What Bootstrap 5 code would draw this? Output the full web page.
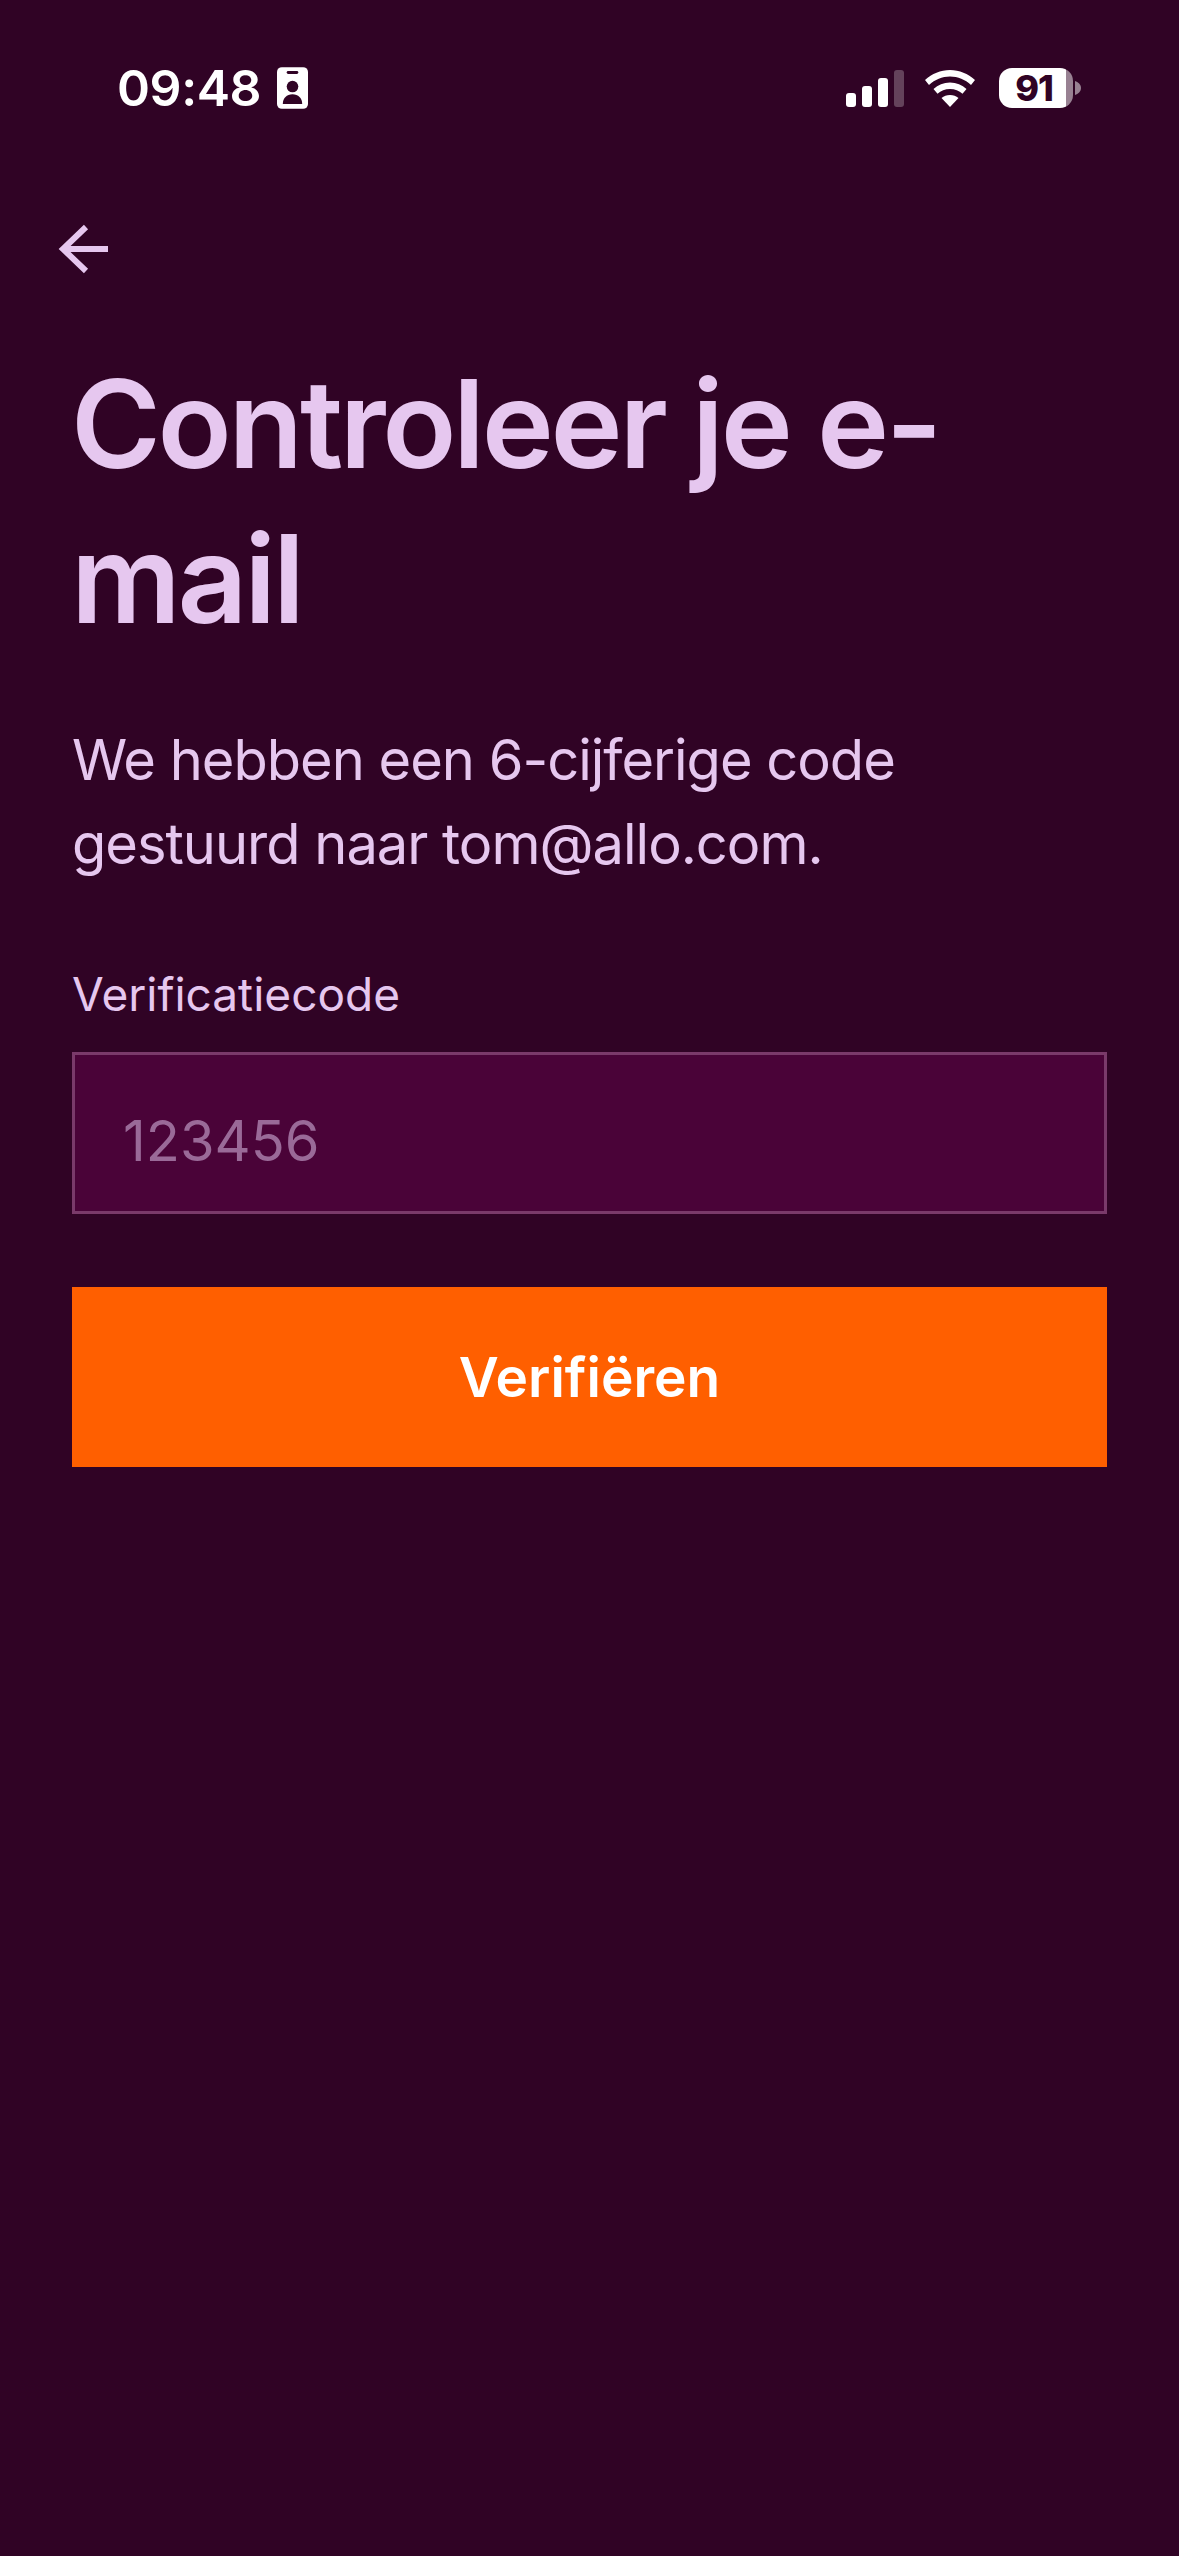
<!DOCTYPE html>
<html lang="nl">

<head>
  <meta charset="utf-8">
  <meta name="viewport" content="width=device-width">
  <title>Controleer je e-mail</title>
  <link href="https://cdn.jsdelivr.net/npm/bootstrap@5.3.3/dist/css/bootstrap.min.css" rel="stylesheet"/>
  <style>
    html, body { height: 100%; }
    body { background: #300325; font-family: Inter, "Noto Sans", sans-serif; color: #e6c7ef; }
    .screen { min-height: 2556px; }
    .status-bar { height: 88px; margin-top: 44px; padding: 0 98px 0 117px; color: #fff; }
    .status-time { font-size: 50px; font-weight: 600; line-height: 1; letter-spacing: -.4px; }
    .signal-icon { margin-right: 21px; }
    .batt-body { width: 74px; height: 40px; border-radius: 13px; background: linear-gradient(90deg, #fff 90%, rgba(255,255,255,.5) 90%); color: #300325; font-size: 36px; font-weight: 800; line-height: 1; letter-spacing: -1px; padding-right: 4px; }
    .batt-nub { margin-left: 2px; }
    .back-link { display: block; width: 56px; height: 56px; margin: 90px 0 0 58px; }
    .content { padding: 0 72px; }
    .page-title { font-size: 122px; font-weight: 600; line-height: 155px; letter-spacing: -3.3px; margin: 68px 0 0 -1px; color: #e6c7ef; }
    .intro { font-size: 56px; line-height: 84px; letter-spacing: -1px; margin: 62px 0 0; font-weight: 400; }
    .code-label { font-size: 46px; line-height: 56px; margin: 80px 0 0; display: block; font-weight: 400; }
    .code-input, .code-input:focus { height: 162px; margin-top: 30px; background: #4a0338; border: 3px solid #7a3a6a; border-radius: 0; padding: 16px 48px 0; font-size: 56px; color: #e6c7ef; box-shadow: none; }
    .code-input::placeholder { color: #9a6a98; opacity: 1; }
    .verify-btn, .verify-btn:hover { height: 180px; margin-top: 73px; background: #ff5f00; color: #fff; border: 0; border-radius: 0; font-size: 55px; font-weight: 600; }
  </style>
</head>

<body>
  <div class="screen">
    <div class="status-bar d-flex justify-content-between align-items-center">
      <div class="d-flex align-items-center gap-3">
        <span class="status-time">09:48</span>
        <svg width="31" height="42" viewBox="0 0 32 43">
          <rect width="32" height="43" rx="5" fill="#fff"/>
          <rect x="10" y="4" width="12" height="3" rx="1.5" fill="#300325"/>
          <circle cx="16" cy="20" r="6" fill="#300325"/>
          <path d="M6 38c0-6 4-10 10-10s10 4 10 10z" fill="#300325"/>
        </svg>
      </div>
      <div class="d-flex align-items-center">
        <svg class="signal-icon" width="58" height="37" viewBox="0 0 58 37">
          <rect x="0" y="23" width="10" height="14" rx="3" fill="#fff"/>
          <rect x="16" y="16" width="10" height="21" rx="3" fill="#fff"/>
          <rect x="32" y="8" width="10" height="29" rx="3" fill="#fff"/>
          <rect x="48" y="0" width="10" height="37" rx="3" fill="#fff" fill-opacity=".25"/>
        </svg>
        <svg width="50" height="37" viewBox="0 0 50 37">
          <path d="M25 0C15.500 0 7 3.700 0 10l4 5C10 9.500 17 6.500 25 6.500S40 9.500 46 15l4-5C43 3.700 34.500 0 25 0z" fill="#fff"/>
          <path d="M25 12.500c-6.500 0-12 2.300-16.500 6.500l4 4.800C16 20.500 20 19 25 19s9 1.500 12.500 4.800l4-4.800C37 14.800 31.500 12.500 25 12.500z" fill="#fff"/>
          <path d="M25 25c-3.500 0-6 1-8.500 3L25 37l8.500-9c-2.500-2-5-3-8.500-3z" fill="#fff"/>
        </svg>
        <div class="batt-body d-flex align-items-center justify-content-center ms-4">91</div>
        <svg class="batt-nub" width="6" height="14" viewBox="0 0 6 14">
          <path d="M0 0c3 1 6 3.500 6 7s-3 6-6 7z" fill="#fff" fill-opacity=".5"/>
        </svg>
      </div>
    </div>

    <a class="back-link" href="#" aria-label="Terug">
      <svg width="56" height="56" viewBox="0 0 56 56" fill="none" stroke="#e6c7ef" stroke-width="6">
        <path d="M5 27H50"/>
        <path d="M28 5L5 27l23 22"/>
      </svg>
    </a>

    <div class="content">
      <h1 class="page-title">Controleer je e-mail</h1>
      <p class="intro">We hebben een 6-cijferige code gestuurd naar tom@allo.com.</p>
      <form>
        <label class="code-label" for="code">Verificatiecode</label>
        <input class="form-control code-input" id="code" placeholder="123456"/>
        <button class="btn verify-btn w-100" type="button">Verifiëren</button>
      </form>
    </div>
  </div>
  <script src="https://cdn.jsdelivr.net/npm/bootstrap@5.3.3/dist/js/bootstrap.bundle.min.js"></script>
</body>

</html>
